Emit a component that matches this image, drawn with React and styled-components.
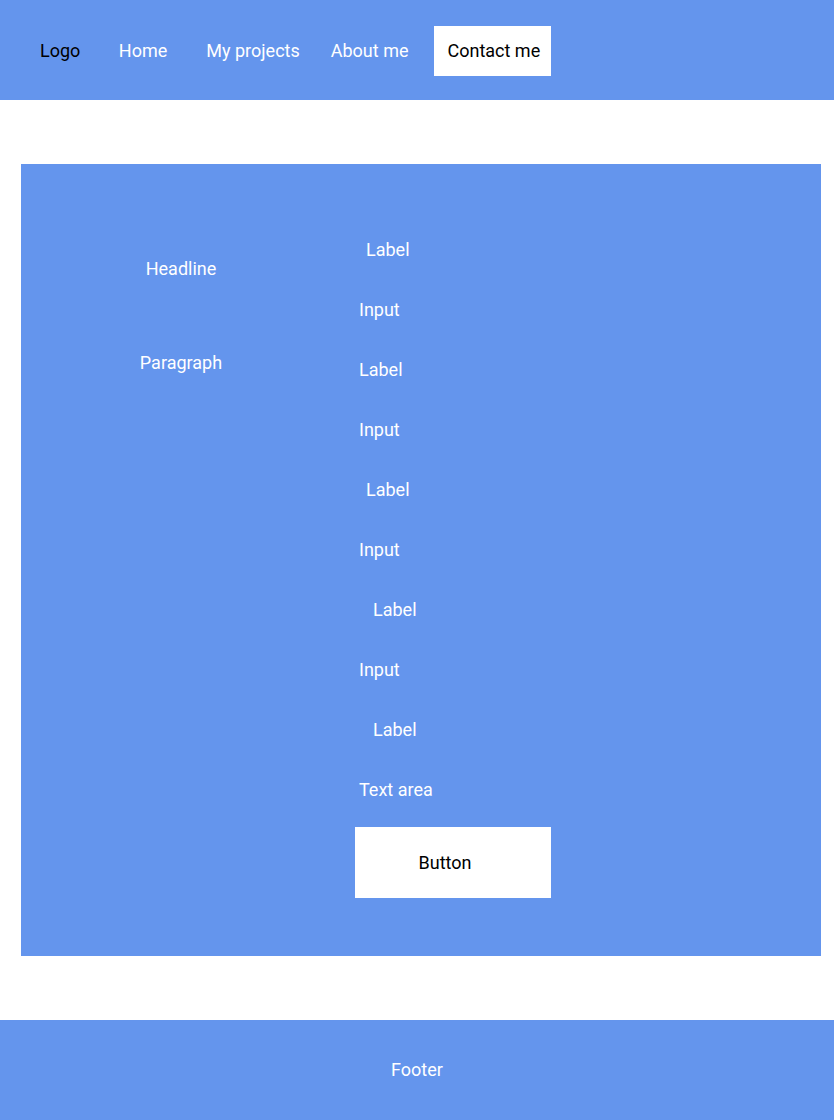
import styled, { createGlobalStyle } from "styled-components";

const GlobalStyle = createGlobalStyle`
  html, body {
    margin: 0;
    padding: 0;
    background: #fff;
    font-family: Roboto, "Liberation Sans", sans-serif;
  }
`;

const BLUE = "#6495ed";

const fields = [
  { text: "Label", indent: 11 },
  { text: "Input", indent: 4 },
  { text: "Label", indent: 4 },
  { text: "Input", indent: 4 },
  { text: "Label", indent: 11 },
  { text: "Input", indent: 4 },
  { text: "Label", indent: 18 },
  { text: "Input", indent: 4 },
  { text: "Label", indent: 18 },
  { text: "Text area", indent: 4 },
];

const App = () => (
  <>
    <GlobalStyle />
    <Header>
      <NavItem $dark>Logo</NavItem>
      <NavItem $gap={38.5}>Home</NavItem>
      <NavItem $gap={39}>My projects</NavItem>
      <NavItem $gap={31}>About me</NavItem>
      <ContactButton>Contact me</ContactButton>
    </Header>
    <Main>
      <Intro>
        <Headline>Headline</Headline>
        <Paragraph>Paragraph</Paragraph>
      </Intro>
      <Form>
        {fields.map((f, i) => (
          <FieldRow key={i} $indent={f.indent}>
            {f.text}
          </FieldRow>
        ))}
        <SubmitButton>Button</SubmitButton>
      </Form>
    </Main>
    <Footer>Footer</Footer>
  </>
);

const Header = styled.header`
  height: 100px;
  background: ${BLUE};
  display: flex;
  align-items: center;
  padding-left: 40px;
  box-sizing: border-box;
`;

const NavItem = styled.span`
  font-size: 18px;
  color: ${(p) => (p.$dark ? "#000" : "#fff")};
  margin-left: ${(p) => p.$gap || 0}px;
`;

const ContactButton = styled.span`
  margin: 2px 0 0 26px;
  height: 50px;
  width: 117px;
  padding: 0 0 2px 13px;
  box-sizing: border-box;
  background: #fff;
  color: #000;
  font-size: 18px;
  display: flex;
  align-items: center;
`;

const Main = styled.main`
  margin: 64px 13px 64px 21px;
  height: 792px;
  background: ${BLUE};
  display: grid;
  grid-template-columns: 320px auto;
  column-gap: 14px;
  align-items: start;
`;

const Intro = styled.div`
  padding-top: 94px;
  display: flex;
  flex-direction: column;
  align-items: center;
  color: #fff;
  font-size: 18px;
`;

const Headline = styled.div`
  line-height: 22px;
`;

const Paragraph = styled.div`
  margin-top: 72px;
  line-height: 22px;
`;

const Form = styled.div`
  padding-top: 55px;
  display: flex;
  flex-direction: column;
  align-items: flex-start;
`;

const FieldRow = styled.div`
  height: 60px;
  display: flex;
  align-items: center;
  padding-left: ${(p) => p.$indent}px;
  color: #fff;
  font-size: 18px;
`;

const SubmitButton = styled.div`
  margin-top: 8px;
  width: 196px;
  height: 71px;
  background: #fff;
  color: #000;
  font-size: 18px;
  display: flex;
  align-items: center;
  justify-content: center;
  padding-right: 16px;
  box-sizing: border-box;
`;

const Footer = styled.footer`
  height: 100px;
  background: ${BLUE};
  color: #fff;
  font-size: 18px;
  display: flex;
  align-items: center;
  justify-content: center;
  padding-bottom: 1px;
  box-sizing: border-box;
`;

export default App;
